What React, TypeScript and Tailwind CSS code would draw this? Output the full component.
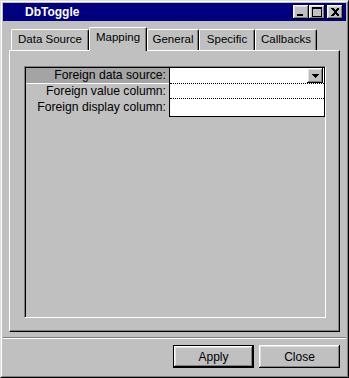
import type { ReactElement } from 'react';

const RAISED =
  'shadow-[inset_-1px_-1px_0_#000000,inset_1px_1px_0_#ffffff,inset_-2px_-2px_0_#808080,inset_2px_2px_0_#dfdfdf]';

const TABS = [
  { label: 'Data Source', width: 'w-[78px]' },
  { label: 'Mapping', width: 'w-[58px]', active: true },
  { label: 'General', width: 'w-[52px]' },
  { label: 'Specific', width: 'w-[56px]' },
  { label: 'Callbacks', width: 'w-[62px]' },
];

function TitleButton({ kind }: { kind: 'min' | 'max' | 'close' }): ReactElement {
  return (
    <div className={`flex h-[14px] w-[16px] items-center justify-center bg-[#c0c0c0] ${RAISED}`}>
      <svg width="16" height="14" viewBox="0 0 16 14" shapeRendering="crispEdges">
        {kind === 'min' && <rect x="4" y="9" width="6" height="2" fill="#000" />}
        {kind === 'max' && (
          <>
            <rect x="3" y="2" width="9" height="9" fill="none" stroke="#000" strokeWidth="1" transform="translate(0.5 0.5)" />
            <rect x="3" y="2" width="10" height="2" fill="#000" />
          </>
        )}
        {kind === 'close' && (
          <path d="M4 3h2l2 2 2-2h2v1l-3 3 3 3v1h-2l-2-2-2 2h-2v-1l3-3-3-3z" fill="#000" />
        )}
      </svg>
    </div>
  );
}

function Tab({ label, width, active }: { label: string; width: string; active?: boolean }): ReactElement {
  return (
    <div
      className={`flex items-center justify-center rounded-t-[2px] border-l border-t border-r border-l-white border-t-white border-r-black bg-[#c0c0c0] text-[11.5px] shadow-[inset_-1px_0_0_#808080] ${width} ${
        active ? 'relative z-10 -mb-px h-[24px] pb-[3px]' : 'h-[21px]'
      }`}
    >
      {label}
    </div>
  );
}

function Button({ label, isDefault }: { label: string; isDefault?: boolean }): ReactElement {
  return (
    <div className={`h-[23px] w-[81px] ${isDefault ? 'border border-black' : ''}`}>
      <div className={`flex h-full w-full items-center justify-center bg-[#c0c0c0] text-[12px] ${RAISED}`}>{label}</div>
    </div>
  );
}

export default function App(): ReactElement {
  return (
    <div className="h-[378px] w-[349px] border border-b-black border-l-[#dfdfdf] border-r-black border-t-[#dfdfdf] bg-[#c0c0c0] font-['Liberation_Sans',Arial,sans-serif] text-[11px] text-black">
      <div className="flex h-full flex-col border border-b-[#808080] border-l-white border-r-[#808080] border-t-white p-px">
        {/* title bar */}
        <div className="flex h-[18px] items-center justify-between bg-[#000080] pl-[22px] pr-[3px]">
          <span className="text-[12px] font-bold text-white">DbToggle</span>
          <div className="flex items-center">
            <TitleButton kind="min" />
            <TitleButton kind="max" />
            <div className="w-[2px]" />
            <TitleButton kind="close" />
          </div>
        </div>

        <div className="mt-[6px] px-[6px]">
          <div className="flex h-[23px] items-end pl-[2px]">
            {TABS.map((t) => (
              <Tab key={t.label} {...t} />
            ))}
          </div>

          {/* tab page */}
          <div className="h-[282px] w-[331px] border border-b-black border-l-white border-r-black border-t-white shadow-[inset_-1px_-1px_0_#808080]">
            <div className="ml-[14px] mt-[15px] h-[252px] w-[302px] border border-b-white border-l-[#808080] border-r-white border-t-[#808080] pl-px pt-px shadow-[inset_1px_1px_0_#000000]">
              <div className="flex text-[12.2px]">
                <div className="flex w-[143px] flex-col text-right">
                  <div className="h-[16px] border-b border-white bg-[#a4a4a4] pr-[3px] leading-[15px]">Foreign data source:</div>
                  <div className="h-[15px] pr-[3px] leading-[15px]">Foreign value column:</div>
                  <div className="h-[17px] pr-[3px] leading-[16px]">Foreign display column:</div>
                </div>
                <div className="flex w-[156px] flex-col border-x border-b border-black bg-white">
                  <div className="flex h-[16px] justify-end border-b border-dotted border-black pr-px">
                    <div className={`flex h-[15px] w-[16px] items-center justify-center bg-[#c0c0c0] ${RAISED}`}>
                      <svg width="7" height="4" viewBox="0 0 7 4" shapeRendering="crispEdges">
                        <path d="M0 0h7v1h-1v1h-1v1h-1v1h-1v-1h-1v-1h-1v-1h-1z" fill="#000" />
                      </svg>
                    </div>
                  </div>
                  <div className="h-[15px] border-b border-dotted border-black" />
                  <div className="h-[17px]" />
                </div>
              </div>
            </div>
          </div>
        </div>

        {/* separator */}
        <div className="mt-[5px] h-[2px] border-b border-t border-b-white border-t-[#808080]" />

        <div className="mt-[6px] flex justify-end gap-[5px] pr-[6px]">
          <Button label="Apply" isDefault />
          <Button label="Close" />
        </div>
      </div>
    </div>
  );
}
